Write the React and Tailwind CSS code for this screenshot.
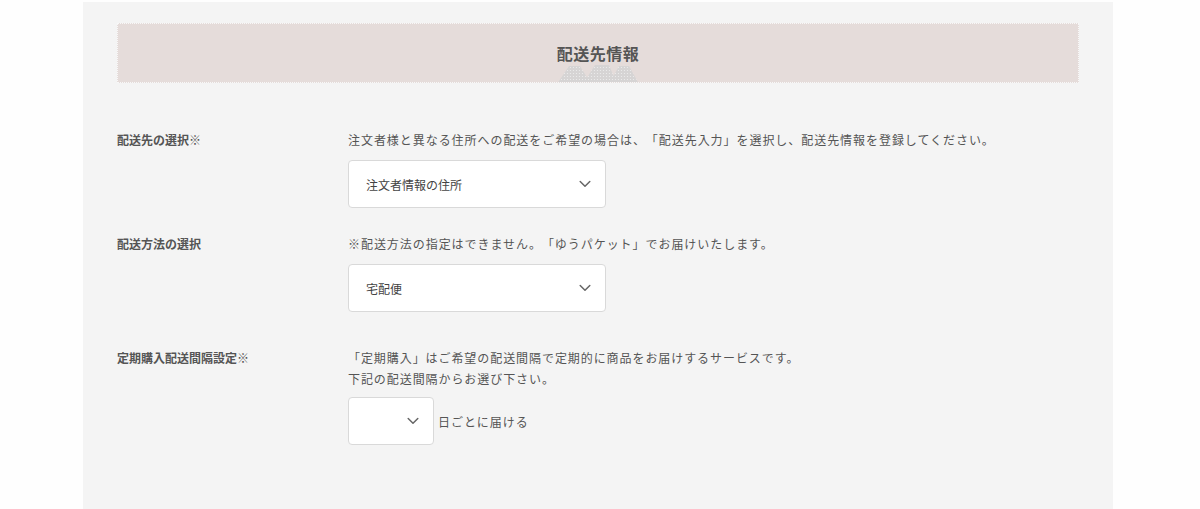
import React from "react";

const font = { fontFamily: '"Noto Sans CJK JP", "Noto Sans", sans-serif' };

function Chevron() {
  return (
    <svg width="12" height="8" viewBox="0 0 12 8" fill="none" className="shrink-0">
      <path d="M1.2 1.5L6 6.2L10.8 1.5" stroke="#666" strokeWidth="1.5" strokeLinecap="round" strokeLinejoin="round" />
    </svg>
  );
}

function Select({ value, w }) {
  return (
    <div
      className={`flex h-[48px] items-center justify-between rounded-[4px] border border-[#d9d9d9] bg-white pl-[17px] pr-[14px] ${w}`}
    >
      <span className="text-[12px] text-[#444]">{value}</span>
      <Chevron />
    </div>
  );
}

function Mountains() {
  return (
    <svg width="82" height="21" viewBox="0 0 82 21" className="absolute left-1/2 top-[39px] -translate-x-1/2">
      <defs>
        <pattern id="dots" width="3" height="3" patternUnits="userSpaceOnUse">
          <rect width="3" height="3" fill="#d6d4d4" />
          <circle cx="1.5" cy="1.5" r="0.6" fill="#eeeeee" />
        </pattern>
      </defs>
      <path d="M0 21 L12 3 L23 3 L34 21 Z" fill="url(#dots)" />
      <path d="M26 21 L38 2 L52 2 L60 21 Z" fill="url(#dots)" />
      <path d="M52 21 L62 3 L72 3 L82 21 Z" fill="url(#dots)" />
    </svg>
  );
}

export default function App() {
  return (
    <div className="h-[509px] w-[1200px] bg-[#fefefe] pt-[2px] [text-spacing-trim:space-all]" style={font}>
      <div className="ml-[83px] h-[507px] w-[1030px] bg-[#f4f4f4] px-[34px] pt-[21px]">
        <div className="relative flex h-[60px] items-center justify-center overflow-hidden border border-dotted border-[#f8f8f8] bg-[#e5dcda]">
          <Mountains />
          <h2 className="relative -mt-[1px] text-[16px] font-bold tracking-[0.5px] text-[#555]">配送先情報</h2>
        </div>

        <div className="grid grid-cols-[231px_1fr] pt-[46px] text-[12px] leading-[21px] text-[#555]">
          <div className="font-bold">配送先の選択※</div>
          <div>
            <p className="tracking-[0.95px]">
              注文者様と異なる住所への配送をご希望の場合は、「配送先入力」を選択し、配送先情報を登録してください。
            </p>
            <div className="mt-[10px]">
              <Select value="注文者情報の住所" w="w-[258px]" />
            </div>
          </div>

          <div className="mt-[25px] font-bold">配送方法の選択</div>
          <div className="mt-[25px]">
            <p className="tracking-[0.95px]">※配送方法の指定はできません。「ゆうパケット」でお届けいたします。</p>
            <div className="mt-[10px]">
              <Select value="宅配便" w="w-[258px]" />
            </div>
          </div>

          <div className="mt-[35px] font-bold">定期購入配送間隔設定※</div>
          <div className="mt-[35px]">
            <p className="tracking-[0.93px]">「定期購入」はご希望の配送間隔で定期的に商品をお届けするサービスです。</p>
            <p className="tracking-[0.93px]">下記の配送間隔からお選び下さい。</p>
            <div className="mt-[8px] flex items-center gap-[4px]">
              <Select value="" w="w-[86px]" />
              <span className="tracking-[0.95px]">日ごとに届ける</span>
            </div>
          </div>
        </div>
      </div>
    </div>
  );
}
